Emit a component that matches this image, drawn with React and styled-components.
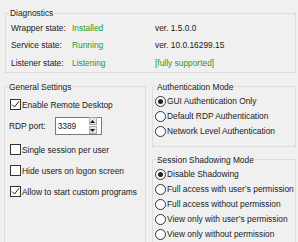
import React from 'react'
import styled, { createGlobalStyle } from 'styled-components'

const Global = createGlobalStyle`
    html, body {
        margin: 0;
        padding: 0;
        background: #f0f0f0;
    }
    body {
        font-family: "Liberation Sans", Arial, sans-serif;
        font-size: 8.4px;
        color: #1a1a1a;
    }
`

const Page = styled.div`
    width: 298px;
    height: 242px;
    overflow: hidden;
    box-sizing: border-box;
    padding: 7px 2px 0 4px;
    background: #f0f0f0;
`

const Group = styled.fieldset`
    margin: 0 0 0 ${p => p.$ml || 0}px;
    padding: 0 0 ${p => p.$pb || 0}px 0;
    border: 1px solid #dcdcdc;
    min-width: 0;
    box-sizing: border-box;
    ${p => p.$grow && 'flex: 1;'}
`

const Legend = styled.legend`
    margin-left: 3px;
    padding: 0 1px;
    line-height: 12px;
    height: 12px;
    color: #222;
`

const DiagGrid = styled.div`
    display: grid;
    grid-template-columns: 61px 83px 1fr;
    grid-auto-rows: 17.5px;
    align-items: center;
    padding-left: 5px;
`

const Value = styled.span`
    color: ${p => (p.$ok ? '#1f9a2a' : '#1a1a1a')};
    white-space: nowrap;
`

const Lower = styled.div`
    display: grid;
    grid-template-columns: 142px 1fr;
    column-gap: 6px;
    margin-top: 8px;
    height: 200px;
`

const Column = styled.div`
    display: flex;
    flex-direction: column;
    gap: 7px;
`

const Stack = styled.div`
    display: flex;
    flex-direction: column;
    padding: ${p => p.$pt || 0}px 0 0 ${p => p.$pl || 0}px;
`

const Line = styled.label`
    display: flex;
    align-items: center;
    height: ${p => p.$h || 15}px;
    margin-top: ${p => p.$mt || 0}px;
    margin-left: ${p => p.$ml || 0}px;
    white-space: nowrap;
    gap: ${p => p.$gap ?? 2}px;
`

const Box = styled.span`
    width: 11px;
    height: 11px;
    box-sizing: border-box;
    border: 1px solid #333;
    background: #fff;
    display: flex;
    align-items: center;
    justify-content: center;
    flex: none;
`

const Circle = styled.span`
    width: 11px;
    height: 11px;
    box-sizing: border-box;
    border: 1px solid #333;
    border-radius: 50%;
    background: #fff;
    display: flex;
    align-items: center;
    justify-content: center;
    flex: none;

    &::after {
        content: '';
        width: 5px;
        height: 5px;
        border-radius: 50%;
        background: ${p => (p.$on ? '#222' : 'transparent')};
    }
`

const Spin = styled.div`
    display: flex;
    align-items: center;
    width: 47px;
    height: 18px;
    box-sizing: border-box;
    border: 1px solid #7a7a7a;
    background: #fff;
    margin-left: 9px;
    padding: 0 2px;
`

const SpinText = styled.span`
    flex: 1;
`

const SpinButtons = styled.div`
    display: flex;
    flex-direction: column;
    gap: 1px;
    width: 8px;
    margin-right: 2px;
`

const SpinButton = styled.div`
    height: 6px;
    border: 1px solid #adadad;
    background: #e5e5e5;
    display: flex;
    align-items: center;
    justify-content: center;
`

const Check = ({ on, children, mt }) => (
    <Line $h={14} $mt={mt} $gap={1}>
        <Box>
            {on && (
                <svg width="9" height="9" viewBox="0 0 9 9">
                    <path d="M1.2 4.6 L3.5 7 L8 1.3" fill="none" stroke="#222" strokeWidth="1" />
                </svg>
            )}
        </Box>
        {children}
    </Line>
)

const Radio = ({ on, children }) => (
    <Line $h={15} $gap={1}>
        <Circle $on={on} />
        {children}
    </Line>
)

const Arrow = ({ up }) => (
    <svg width="5" height="3" viewBox="0 0 5 3">
        <path d={up ? 'M0 3 L2.5 0 L5 3 Z' : 'M0 0 L2.5 3 L5 0 Z'} fill="#111" />
    </svg>
)

const diagnostics = [
    ['Wrapper state:', 'Installed', 'ver. 1.5.0.0'],
    ['Service state:', 'Running', 'ver. 10.0.16299.15'],
    ['Listener state:', 'Listening', '[fully supported]', true]
]

const shadowing = [
    'Disable Shadowing',
    'Full access with user\u2019s permission',
    'Full access without permission',
    'View only with user\u2019s permission',
    'View only without permission'
]

export default function App() {
    return (
        <Page>
            <Global />
            <Group $ml={1}>
                <Legend>Diagnostics</Legend>
                <DiagGrid>
                    {diagnostics.map(([label, state, info, ok]) => (
                        <React.Fragment key={label}>
                            <span>{label}</span>
                            <Value $ok>{state}</Value>
                            <Value $ok={ok}>{info}</Value>
                        </React.Fragment>
                    ))}
                </DiagGrid>
            </Group>
            <Lower>
                <Group>
                    <Legend>General Settings</Legend>
                    <Stack $pt={5} $pl={5}>
                        <Check on>Enable Remote Desktop</Check>
                        <Line $h={18} $mt={5} $gap={0} $ml={-1}>
                            RDP port:
                            <Spin>
                                <SpinText>3389</SpinText>
                                <SpinButtons>
                                    <SpinButton>
                                        <Arrow up />
                                    </SpinButton>
                                    <SpinButton>
                                        <Arrow />
                                    </SpinButton>
                                </SpinButtons>
                            </Spin>
                        </Line>
                        <Check mt={8}>Single session per user</Check>
                        <Check mt={7}>Hide users on logon screen</Check>
                        <Check on mt={7}>
                            Allow to start custom programs
                        </Check>
                    </Stack>
                </Group>
                <Column>
                    <Group $pb={7}>
                        <Legend>Authentication Mode</Legend>
                        <Stack $pt={1} $pl={2}>
                            <Radio on>GUI Authentication Only</Radio>
                            <Radio>Default RDP Authentication</Radio>
                            <Radio>Network Level Authentication</Radio>
                        </Stack>
                    </Group>
                    <Group $grow>
                        <Legend>Session Shadowing Mode</Legend>
                        <Stack $pt={1} $pl={2}>
                            {shadowing.map((s, i) => (
                                <Radio key={s} on={i === 0}>
                                    {s}
                                </Radio>
                            ))}
                        </Stack>
                    </Group>
                </Column>
            </Lower>
        </Page>
    )
}
